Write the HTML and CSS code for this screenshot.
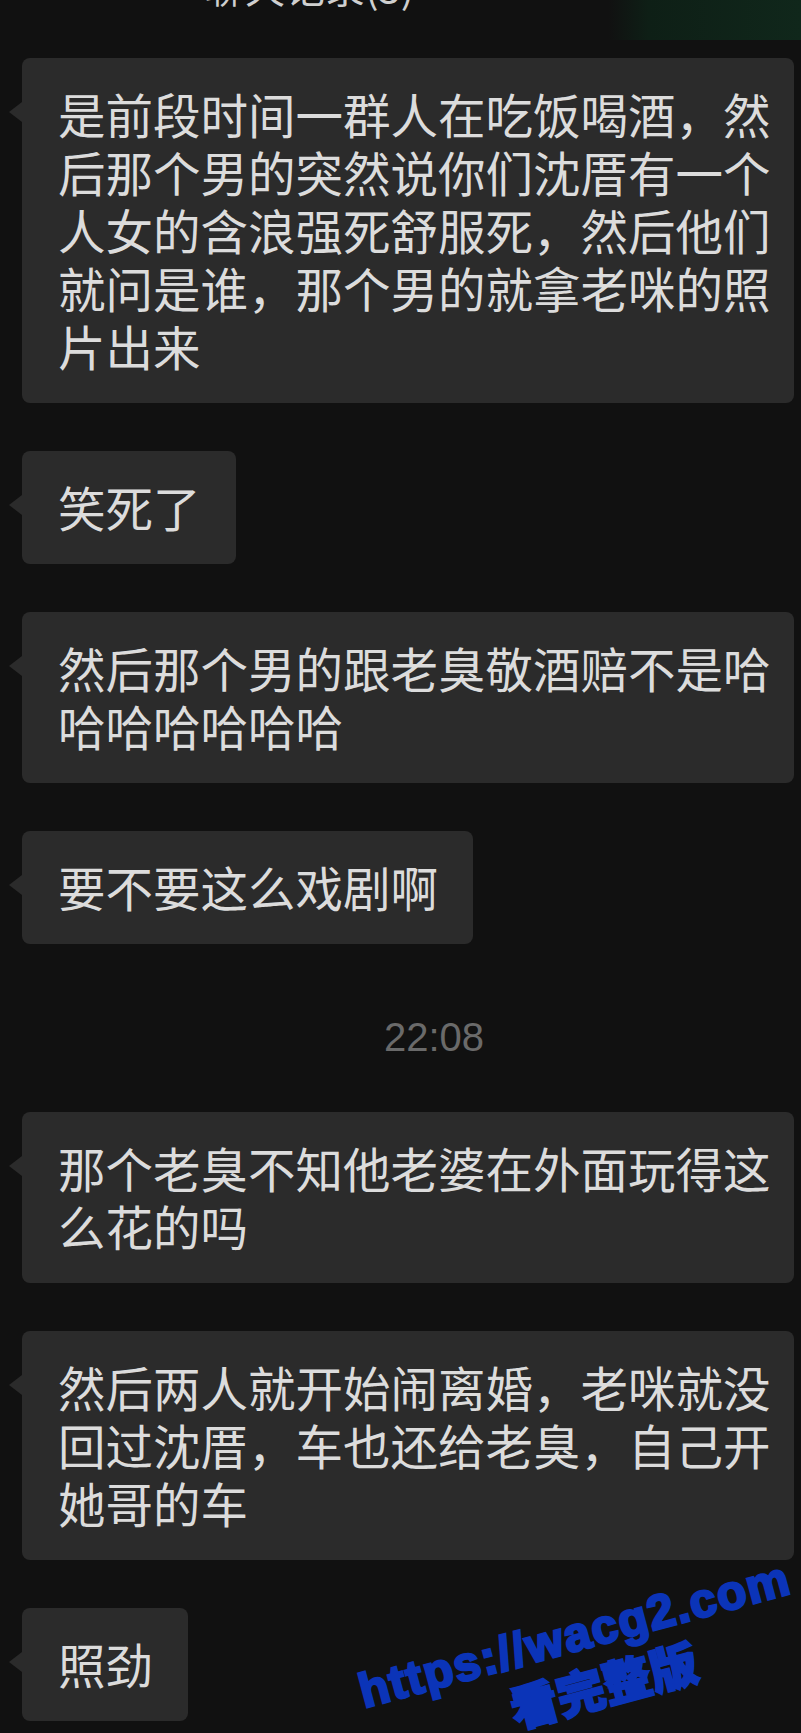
FILE: index.html
```html
<!DOCTYPE html>
<html lang="zh-CN">
<head>
  <meta charset="UTF-8" />
  <title>聊天记录</title>
  <link rel="stylesheet" href="styles.css">
</head>
<body>

  <header class="topbar">
    <div class="title">聊天记录(3)</div>
  </header>

  <main class="chat" aria-label="Chat messages">
    <div class="bubble bubble-long">是前段时间一群人在吃饭喝酒，然后那个男的突然说你们沈厝有一个人女的含浪强死舒服死，然后他们就问是谁，那个男的就拿老咪的照片出来</div>

    <div class="bubble">笑死了</div>

    <div class="bubble bubble-long">然后那个男的跟老臭敬酒赔不是哈哈哈哈哈哈哈</div>

    <div class="bubble">要不要这么戏剧啊</div>

    <div class="time">22:08</div>

    <div class="bubble bubble-long">那个老臭不知他老婆在外面玩得这么花的吗</div>

    <div class="bubble bubble-long">然后两人就开始闹离婚，老咪就没回过沈厝，车也还给老臭，自己开她哥的车</div>

    <div class="bubble">照劲</div>
  </main>

  <!-- watermark stamped over the screenshot -->
  <div class="watermark" aria-hidden="true">
    <div class="wm-url">https://wacg2.com</div>
    <div class="wm-cn">看完整版</div>
  </div>

</body>
</html>
```

FILE: styles.css
```css
:root {
  --bg: #111111;
  --bubble: #2b2b2b;
  --text: #dcdcdc;
  --time: #6a6a6a;
  --mark: #0b34b8;
}

html, body {
  overflow: hidden;
}

body {
  margin: 0;
  height: 1733px;
  background: var(--bg);
  color: var(--text);
  font-family: "Noto Sans CJK SC", "Noto Sans", sans-serif;
}

/* cut-off title bar at the top of the photo */
.topbar {
  height: 58px;
  overflow: hidden;
  background: linear-gradient(90deg, transparent 76%, #0e1f16 81%, #10271b 100%) top / 100% 40px no-repeat;
}
.topbar .title {
  margin-top: -36px;
  padding-left: 205px;
  font-size: 40px;
  line-height: 44px;
  color: #cfcfcf;
}

.chat {
  display: flex;
  flex-direction: column;
  align-items: flex-start;
  gap: 48px;
  padding-left: 22px;
}

.bubble {
  position: relative;
  box-sizing: border-box;
  max-width: 772px;
  padding: 27px 35px 28px 36px;
  background: var(--bubble);
  border-radius: 8px;
  font-size: 47.5px;
  line-height: 58px;
  color: var(--text);
}
.bubble-long {
  padding-right: 22px;
}
/* little tail on the left side */
.bubble::before {
  content: '';
  position: absolute;
  left: -13px;
  top: 44px;
  border-top: 10px solid transparent;
  border-bottom: 10px solid transparent;
  border-right: 13px solid var(--bubble);
}

.time {
  align-self: stretch;
  box-sizing: border-box;
  padding: 21px 0 3px 45px;
  text-align: center;
  font-family: "Liberation Sans", Arial, sans-serif;
  font-size: 40px;
  line-height: 48px;
  color: var(--time);
}

/* blue watermark */
.watermark {
  position: absolute;
  left: 342px;
  top: 1608px;
  width: 480px;
  text-align: center;
  color: var(--mark);
  transform: rotate(-15deg);
}
.wm-url {
  font-family: "Liberation Sans", Arial, sans-serif;
  font-weight: 700;
  font-size: 48px;
  line-height: 52px;
  letter-spacing: 1.5px;
  -webkit-text-stroke: 2.5px var(--mark);
}
.wm-cn {
  padding-left: 30px;
  font-family: "Noto Sans CJK SC", sans-serif;
  font-weight: 900;
  font-size: 48px;
  line-height: 56px;
  -webkit-text-stroke: 2px var(--mark);
}
```
